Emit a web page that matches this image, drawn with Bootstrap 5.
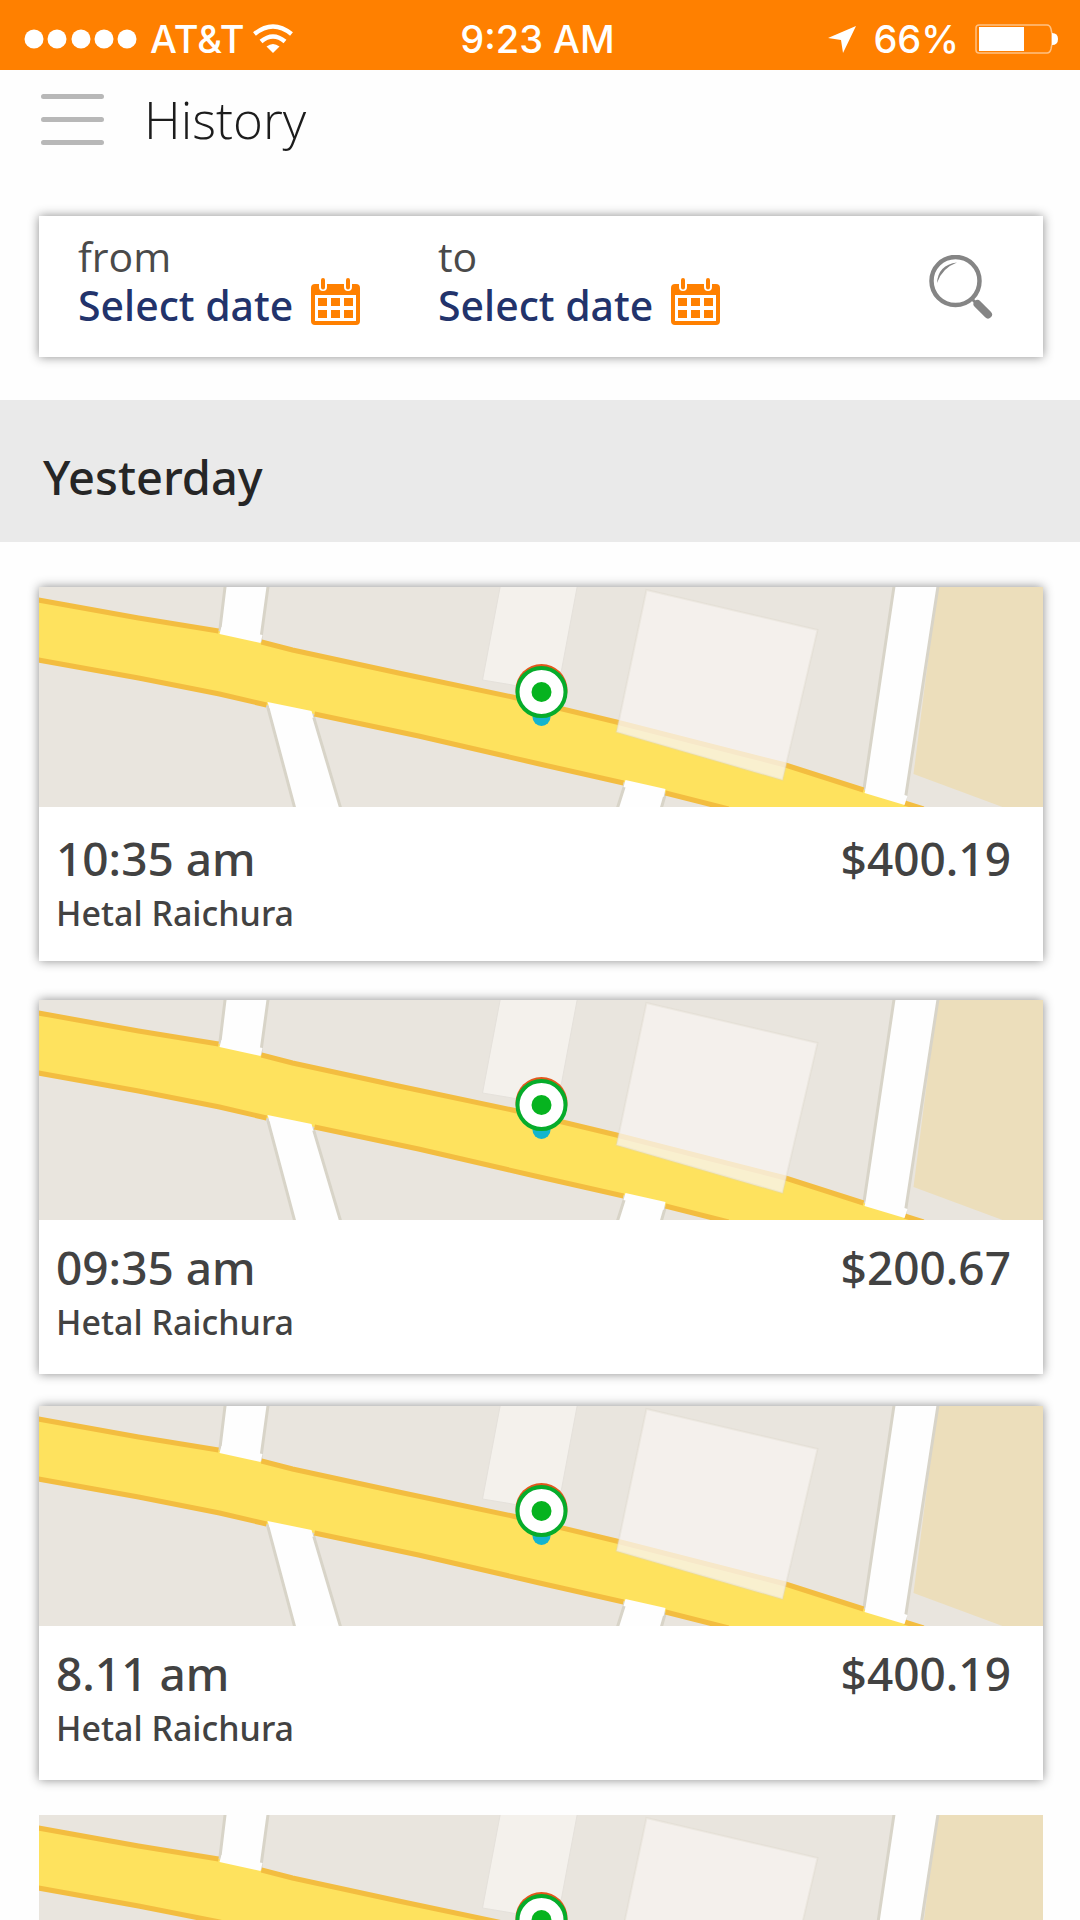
<!DOCTYPE html>
<html lang="en">
<head>
<meta charset="utf-8">
<meta name="viewport" content="width=device-width, initial-scale=1">
<title>History</title>
<link rel="stylesheet" href="https://cdn.jsdelivr.net/npm/bootstrap@5.3.0/dist/css/bootstrap.min.css">
<style>
  body { font-family: "Noto Sans", "Open Sans", sans-serif; background: #fefefe; color: #424242; }
  svg { display: block; flex: none; }
  .status-bar { background: #ff8000; color: #fff; height: 70px; padding: 8px 21px 0 24px; font: 500 38px/50px Inter, Roboto, sans-serif; }
  .status-side { flex: 1 1 0; }
  .signal { margin-right: 12px; }
  .app-bar { padding: 19px 36px 67px 41px; gap: 40px; }
  .app-bar h1 { font-family: "Open Sans", sans-serif; font-size: 51px; line-height: 60px; font-weight: 300; color: #1c1c1c; }
  .inset { margin-left: 39px; margin-right: 37px; }
  .panel { background: #fff; box-shadow: 0 0 10px rgba(0, 0, 0, .45); }
  .filter { padding: 0 50px 0 39px; }
  .date-field { width: 360px; padding: 16px 0 27px; }
  .date-field label { font-family: "Open Sans", sans-serif; font-size: 41px; line-height: 48px; font-weight: 400; color: #4a4a4a; }
  .date-btn { height: 50px; font-size: 41px; line-height: 50px; font-weight: 500; color: #22336b; gap: 18px; }
  .day-band { margin-top: 43px; padding: 47px 43px 35px; background: #eaeaea; color: #262626; font-size: 47px; line-height: 60px; font-weight: 500; }
  .trips { padding-top: 45px; }
  .trip + .trip { margin-top: 35px; }
  .trip + .trip:nth-child(2) { margin-top: 39px; }
  .trip + .trip:nth-child(3) { margin-top: 32px; }
  .map { width: 100%; height: 220px; }
  .trip-info { padding: 22px 32px 22px 17px; }
  .trip:first-child .trip-info { padding-top: 26px; padding-bottom: 18px; }
  .trip-main { font-size: 46px; line-height: 50px; font-weight: 500; }
  .trip-name { font-size: 34px; line-height: 60px; font-weight: 500; }
</style>
</head>
<body class="vh-100 overflow-hidden">

<svg width="0" height="0" class="position-absolute" aria-hidden="true">
  <symbol id="calendar" viewBox="0 0 49 47">
    <path fill="#ff8000" fill-rule="evenodd" d="M4 6H45Q49 6 49 10V43Q49 47 45 47H4Q0 47 0 43V10Q0 6 4 6ZM4 17V43H45V17Z"/>
    <path fill="#ff8000" d="M7 20h9v8H7zM20 20h9v8h-9zM33 20h9v8h-9zM7 32h9v8H7zM20 32h9v8h-9zM33 32h9v8h-9z"/>
    <path stroke="#fff" stroke-width="8" stroke-linecap="round" d="M12 3V9M37 3V9"/>
    <path stroke="#ff8000" stroke-width="4" stroke-linecap="round" d="M12 2V9.500M37 2V9.500"/>
  </symbol>
  <symbol id="map" viewBox="0 0 1005 220" preserveAspectRatio="xMidYMid slice">
    <path fill="#e9e5de" d="M0 0H1005V220H0Z"/>
    <path fill="#ecdebb" d="M899 0H1005V220H964L875 187Z"/>
    <path fill="#f4f1ec" stroke="#e5e1db" stroke-width="1" d="M462-2H539L518 110L474 98L444 93Z"/>
    <g fill="#fefefe" stroke="#d8d4c8" stroke-width="3">
      <path d="M187-4H230L221 62L180 54Z"/>
      <path d="M226 108L271 116L303 224H257Z"/>
      <path d="M590 186L630 196L622 224H578Z"/>
      <path d="M856-4H900L865 224L824 212Z"/>
    </g>
    <path fill="#fee25e" d="M0 14L100 31L180 44L223 55L254 63L360 86L474 110L578 135L747 178L825 203L883 220H683L585 195L501 177L380 149L276 127L228 118L181 107L100 91L0 73Z"/>
    <g fill="none" stroke="#f3bd40" stroke-width="5">
      <path d="M0 13L100 31L180 44M223 55L254 63L360 86L474 110L578 135L747 178L825 203M866 216L885 222"/>
      <path d="M0 73L100 91L181 107L228 118M276 127L380 149L501 177L585 196M627 206L690 222"/>
    </g>
    <path fill="#fefefe" d="M183 40L224 48L222 56L181 47ZM229 115L273 124L275 131L231 121ZM587 193L627 202L625 210L585 200ZM829 196L869 209L866 218L826 206Z"/>
    <path fill="#f7f4f0" fill-opacity=".78" stroke="#d9d3c6" stroke-opacity=".3" stroke-width="2" d="M608 3L779 43L744 193L578 145Z"/>
    <circle cx="503" cy="130" r="9" fill="#13b4cf"/>
    <circle cx="503" cy="103" r="26" fill="#e2581c"/>
    <circle cx="503" cy="105" r="24" fill="#fff" stroke="#06ac2b" stroke-width="4"/>
    <circle cx="503" cy="105" r="10" fill="#06b31f"/>
  </symbol>
</svg>

<div class="status-bar d-flex align-items-center text-nowrap">
  <div class="status-side d-flex align-items-center">
    <svg width="114" height="20" fill="#fff" class="signal" aria-hidden="true"><circle cx="10" cy="10" r="9.500"/><circle cx="33" cy="10" r="9.500"/><circle cx="57" cy="10" r="9.500"/><circle cx="80" cy="10" r="9.500"/><circle cx="103" cy="10" r="9.500"/></svg>
    <span>AT&amp;T</span>
    <svg width="40" height="30" viewBox="0 0 40 30" class="ms-2" aria-hidden="true"><g fill="none" stroke="#fff" stroke-width="4.500"><path d="M1.500 10Q20-5 38.500 10"/><path d="M8 17.500Q20 7.500 32 17.500"/></g><path fill="#fff" d="M20 29L13.500 22.500Q20 17.500 26.500 22.500Z"/></svg>
  </div>
  <span class="me-2">9:23 AM</span>
  <div class="status-side d-flex align-items-center justify-content-end">
    <svg width="30" height="29" viewBox="0 0 30 29" class="me-3" aria-hidden="true"><path fill="#fff" d="M29 1L16 28L14 15L1 13Z"/></svg>
    <span>66%</span>
    <svg width="84" height="30" viewBox="0 0 84 30" class="ms-3" aria-hidden="true"><path fill="none" stroke="#ffc183" stroke-width="1.500" d="M4 1H72Q75 1 76 5L77 10V20L76 25Q75 29 72 29H4Q1 29 1 26V4Q1 1 4 1Z"/><path fill="#fff" d="M4 3H49V27H4ZM77 9Q83 9 83 15T77 21Z"/></svg>
  </div>
</div>

<header class="app-bar d-flex align-items-center">
  <button type="button" class="btn p-0 border-0" aria-label="Menu">
    <svg width="63" height="51" viewBox="0 0 63 51"><path stroke="#b8b8b8" stroke-width="5" stroke-linecap="round" d="M2.500 2.500H60.500M2.500 25.500H60.500M2.500 48.500H60.500"/></svg>
  </button>
  <h1 class="m-0">History</h1>
</header>

<form class="panel filter inset d-flex align-items-center">
  <div class="date-field">
    <label class="d-block" for="from-date">from</label>
    <button type="button" id="from-date" class="date-btn btn p-0 border-0 d-flex align-items-center text-nowrap">Select date<svg width="49" height="47" class="mb-2"><use href="#calendar"/></svg></button>
  </div>
  <div class="date-field">
    <label class="d-block" for="to-date">to</label>
    <button type="button" id="to-date" class="date-btn btn p-0 border-0 d-flex align-items-center text-nowrap">Select date<svg width="49" height="47" class="mb-2"><use href="#calendar"/></svg></button>
  </div>
  <button type="submit" class="btn p-0 border-0 ms-auto" aria-label="Search">
    <svg width="64" height="64" viewBox="0 0 64 64" fill="none" stroke="#858585"><circle cx="26.500" cy="26" r="24" stroke-width="4.500"/><path stroke-width="3" d="M42 43L47 48"/><path stroke-width="8" stroke-linecap="round" d="M48.500 49L59 59.500"/><path fill="#858585" stroke="none" d="M8 28Q9 10 28 7.500Q13 13 8 28Z"/></svg>
  </button>
</form>

<h2 class="day-band mb-0">Yesterday</h2>

<main class="trips inset">
  <article class="trip panel">
    <svg class="map" role="img" aria-label="Map"><use href="#map"/></svg>
    <div class="trip-info">
      <div class="trip-main d-flex justify-content-between"><span>10:35 am</span><span>$400.19</span></div>
      <div class="trip-name">Hetal Raichura</div>
    </div>
  </article>
  <article class="trip panel">
    <svg class="map" role="img" aria-label="Map"><use href="#map"/></svg>
    <div class="trip-info">
      <div class="trip-main d-flex justify-content-between"><span>09:35 am</span><span>$200.67</span></div>
      <div class="trip-name">Hetal Raichura</div>
    </div>
  </article>
  <article class="trip panel">
    <svg class="map" role="img" aria-label="Map"><use href="#map"/></svg>
    <div class="trip-info">
      <div class="trip-main d-flex justify-content-between"><span>8.11 am</span><span>$400.19</span></div>
      <div class="trip-name">Hetal Raichura</div>
    </div>
  </article>
  <article class="trip">
    <svg class="map" role="img" aria-label="Map"><use href="#map"/></svg>
  </article>
</main>

<script src="https://cdn.jsdelivr.net/npm/bootstrap@5.3.0/dist/js/bootstrap.bundle.min.js"></script>
</body>
</html>
